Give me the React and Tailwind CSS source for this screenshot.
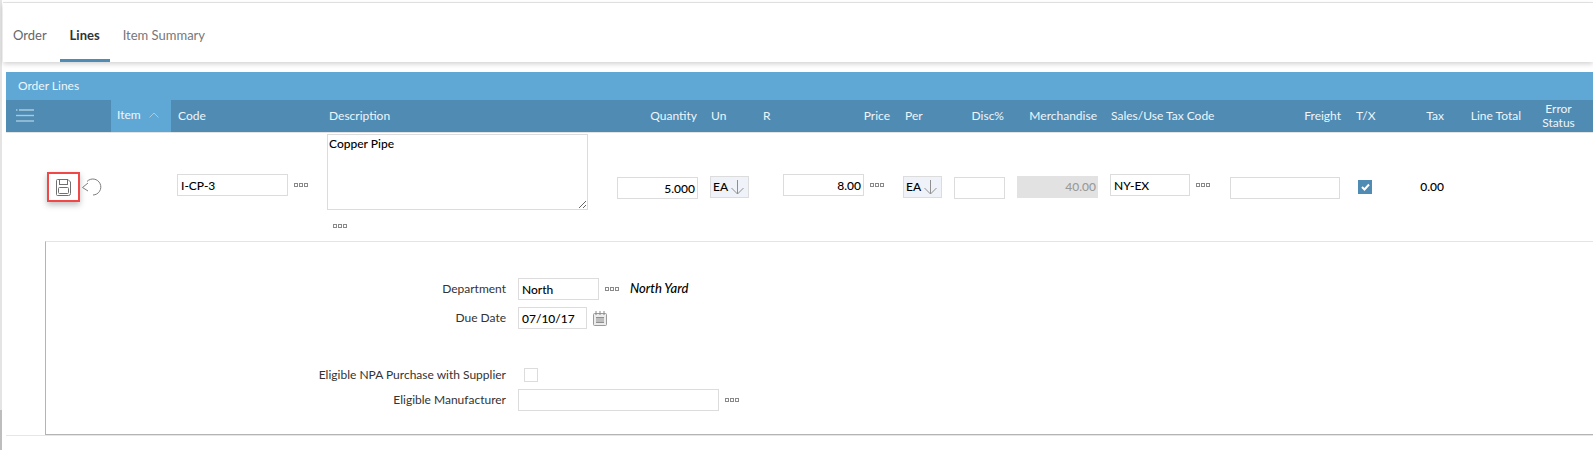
const lato = 'font-["Lato",sans-serif]';
const inputCls =
  'h-[22px] border border-[#dcdcdc] bg-white pl-[3px] pr-[2px] text-[12px] font-medium text-black outline-none';

const columns =
  'grid grid-cols-[105px_60px_151px_285px_97px_53px_16px_124px_51px_63px_93px_119px_123px_46px_57px_75px_69px]';

const Dots = ({ className = '' }) => (
  <svg width="14" height="4" viewBox="0 0 14 4" className={className}>
    <rect x="0.5" y="0.5" width="3" height="3" fill="none" stroke="#8a8a8a" />
    <rect x="5.5" y="0.5" width="3" height="3" fill="none" stroke="#8a8a8a" />
    <rect x="10.5" y="0.5" width="3" height="3" fill="none" stroke="#8a8a8a" />
  </svg>
);

const MenuIcon = () => (
  <svg width="18" height="13" viewBox="0 0 18 13" className="mb-[2px] ml-[10px]">
    <g stroke="#a9cbe0" strokeWidth="1.4">
      <path d="M0 1h1.5M3 1h15" />
      <path d="M0 6.5h18" />
      <path d="M0 12h18" />
    </g>
  </svg>
);

const SaveIcon = () => (
  <svg width="15" height="17" viewBox="0 0 15 17" fill="none" stroke="#707070" strokeWidth="1">
    <path d="M1.5.5h10.5l2.5 2.5v11.5a2 2 0 0 1-2 2h-11a1 1 0 0 1-1-1v-14a1 1 0 0 1 1-1z" />
    <rect x="3.5" y="0.5" width="8" height="5" />
    <rect x="2.5" y="8.5" width="10" height="6" rx="1" />
  </svg>
);

const UndoIcon = () => (
  <svg width="21" height="18" viewBox="0 0 21 18" fill="none" stroke="#7d7d7d" strokeWidth="1">
    <path d="M6 3.5A8 8 0 1 1 12 17" />
    <path d="M7 5L1.5 9.5 7 13" />
  </svg>
);

const DownArrow = () => (
  <svg width="13" height="15" viewBox="0 0 13 15" fill="none" stroke="#8f8f8f" strokeWidth="1">
    <path d="M6.5 0v14M.5 8l6 6 6-6" />
  </svg>
);

const CalendarIcon = () => (
  <svg width="14" height="15" viewBox="0 0 14 15" className="ml-[6px]">
    <rect x="0.5" y="2.5" width="13" height="12" rx="1" fill="#ececec" stroke="#9a9a9a" />
    <path d="M3 0v4M7 0v4M11 0v4" stroke="#8a8a8a" />
    <rect x="3" y="6" width="8" height="6" fill="#8f8f8f" />
    <path d="M3 8h8M3 10h8" stroke="#ececec" />
  </svg>
);

const UnitSelect = () => (
  <div className="ml-[6px] flex h-[22px] w-[39px] items-center justify-between border border-[#dcdcdc] bg-[#eff2f8] pl-[2px] pr-[4px] text-[12px] font-medium text-black">
    EA
    <DownArrow />
  </div>
);

const Header = ({ children, right, className = '' }) => (
  <div
    className={`flex items-center whitespace-nowrap text-[12px] leading-[14px] text-[#eef6fb] ${right ? 'justify-end pr-[7px]' : 'pl-[7px]'} ${className}`}
  >
    {children}
  </div>
);

const FormRow = ({ label, children, className = '' }) => (
  <div className={`flex items-center ${className}`}>
    <div className="w-[472px] pr-[12px] text-right text-[12px] text-[#333333]">{label}</div>
    {children}
  </div>
);

export default function App() {
  return (
    <div className={`flex h-[450px] w-[1593px] overflow-hidden bg-white ${lato}`}>
      <div className="flex w-[2px] shrink-0 flex-col">
        <div className="h-[410px] bg-[#e4e4e4]" />
        <div className="flex-1 bg-[#bdbdbd]" />
      </div>

      <div className="flex min-w-0 flex-1 flex-col">
        <div className="ml-px mt-[2px] h-px bg-[#e6e6e6]" />

        <nav className="ml-px flex h-[59px] items-end gap-[13px] pl-[10px] text-[13px] shadow-[0_2px_5px_rgba(0,0,0,0.18)]">
          <div className="h-[41px] pt-[5px] text-[#666666]">Order</div>
          <div className="h-[41px] w-[50px] border-b-[3px] border-[#4f8bb3] pt-[5px] text-center font-bold text-[#333333]">
            Lines
          </div>
          <div className="h-[41px] pt-[5px] text-[#777777]">Item Summary</div>
        </nav>

        <main className="ml-[4px] mt-[10px] flex flex-1 flex-col">
          <div className="flex h-[28px] items-center bg-[#5fa8d6] pl-[12px] text-[12px] text-[#eef6fb]">
            Order Lines
          </div>

          <div className={`${columns} h-[33px] border-b border-[#e4e4e4] bg-[#4f8bb3]`}>
            <div className="flex items-center">
              <MenuIcon />
            </div>
            <div className="flex items-center gap-[8px] bg-[#5fa8d6] pb-[2px] pl-[6px] text-[12px] text-[#eef6fb]">
              Item
              <svg width="10" height="6" viewBox="0 0 10 6" fill="none" stroke="#a9cbe0">
                <path d="M.5 5.5L5 1l4.5 4.5" />
              </svg>
            </div>
            <Header>Code</Header>
            <Header>Description</Header>
            <Header right>Quantity</Header>
            <Header>Un</Header>
            <Header className="!pl-[6px]">R</Header>
            <Header right>Price</Header>
            <Header className="!pl-[8px]">Per</Header>
            <Header right>Disc%</Header>
            <Header right>Merchandise</Header>
            <Header>Sales/Use Tax Code</Header>
            <Header right className="!pr-[5px]">Freight</Header>
            <Header className="!pl-[10px]">T/X</Header>
            <Header right className="!pr-[5px]">Tax</Header>
            <Header right className="!pr-[3px]">Line Total</Header>
            <Header className="justify-center text-center !pl-0">
              Error
              <br />
              Status
            </Header>
          </div>

          <div className={`${columns} h-[108px] items-center`}>
            <div className="col-span-2 flex items-center pl-[41px]">
              <div className="flex h-[30px] w-[33px] items-center justify-center border-[2px] border-[#f04848] shadow-[0_3px_6px_rgba(0,0,0,0.25)]">
                <SaveIcon />
              </div>
              <div className="ml-px">
                <UndoIcon />
              </div>
            </div>

            <div className="mb-[4px] flex items-center pl-[6px]">
              <input readOnly value="I-CP-3" className={`${inputCls} w-[111px]`} />
              <Dots className="ml-[6px]" />
            </div>

            <div className="flex h-full flex-col pl-[5px] pt-px">
              <textarea
                readOnly
                value="Copper Pipe"
                className="block h-[76px] w-[261px] border border-[#dcdcdc] px-[1px] text-[12px] font-medium text-black outline-none"
              />
              <Dots className="ml-[6px] mt-[14px]" />
            </div>

            <div className="pl-[10px]">
              <input readOnly value="5.000" className={`${inputCls} w-[81px] text-right`} />
            </div>
            <UnitSelect />
            <div />

            <div className="mb-[4px] flex items-center pl-[10px]">
              <input readOnly value="8.00" className={`${inputCls} w-[81px] text-right`} />
              <Dots className="ml-[6px]" />
            </div>
            <UnitSelect />
            <div className="pl-[6px]">
              <input readOnly className={`${inputCls} w-[51px]`} />
            </div>
            <div className="pl-[6px]">
              <div className="flex h-[22px] w-[81px] items-center justify-end bg-[#e2e2e2] pr-[2px] text-[12px] font-medium text-[#9a9a9a]">
                40.00
              </div>
            </div>

            <div className="mb-[4px] flex items-center pl-[6px]">
              <input readOnly value="NY-EX" className={`${inputCls} w-[80px]`} />
              <Dots className="ml-[6px]" />
            </div>

            <div className="pl-[7px]">
              <input readOnly className={`${inputCls} w-[110px]`} />
            </div>

            <div className="pl-[12px]">
              <div className="flex h-[14px] w-[14px] items-center justify-center bg-[#4f8bb3]">
                <svg width="9" height="8" viewBox="0 0 9 8" fill="none" stroke="#ffffff" strokeWidth="2">
                  <path d="M1 4l2.5 2.5L8 1.5" />
                </svg>
              </div>
            </div>

            <div className="pr-[5px] text-right text-[12px] font-medium text-black">0.00</div>
            <div />
            <div />
          </div>

          <div className="flex h-[195px] border-b border-[#e6e6e6] pl-[39px]">
            <div className="flex-1 border-l border-t border-b border-l-[#b4b4b4] border-b-[#b4b4b4] border-t-[#e4e4e4] pt-[36px]">
              <FormRow label="Department" className="h-[22px]">
                <input readOnly value="North" className={`${inputCls} w-[81px]`} />
                <Dots className="ml-[6px]" />
                <span className="ml-[11px] text-[13px] font-medium italic text-black">North Yard</span>
              </FormRow>
              <FormRow label="Due Date" className="mt-[7px] h-[22px]">
                <input readOnly value="07/10/17" className={`${inputCls} w-[69px]`} />
                <CalendarIcon />
              </FormRow>
              <FormRow label="Eligible NPA Purchase with Supplier" className="mt-[39px] h-[14px]">
                <div className="ml-[6px] h-[14px] w-[14px] border border-[#dcdcdc]" />
              </FormRow>
              <FormRow label="Eligible Manufacturer" className="mt-[7px] h-[22px]">
                <input readOnly className={`${inputCls} w-[201px]`} />
                <Dots className="ml-[6px]" />
              </FormRow>
            </div>
          </div>
        </main>
      </div>
    </div>
  );
}
